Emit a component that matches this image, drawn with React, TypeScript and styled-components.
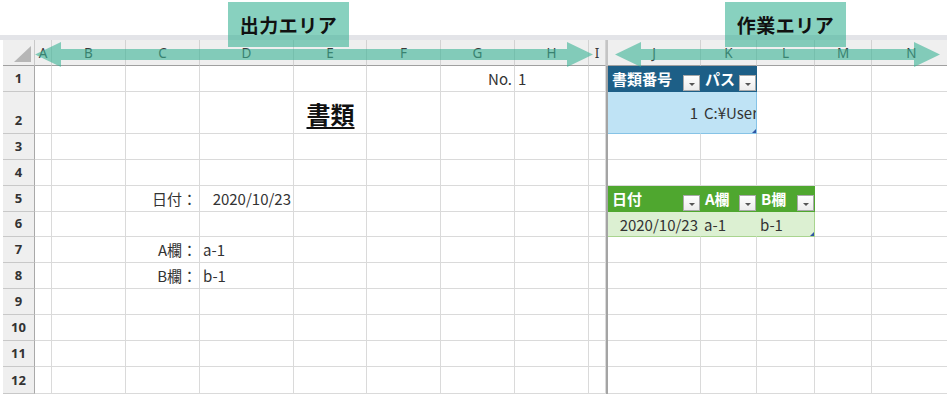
import * as React from "react";
import styled, { createGlobalStyle } from "styled-components";

const GlobalStyle = createGlobalStyle`
  html, body {
    margin: 0;
    padding: 0;
    background: #fff;
  }
  body {
    font-family: "Noto Sans CJK JP", "Noto Sans", sans-serif;
  }
`;

// column widths as measured in the workbook view
const COLUMNS = [
  { key: "A", width: 17 },
  { key: "B", width: 74 },
  { key: "C", width: 74 },
  { key: "D", width: 94 },
  { key: "E", width: 73 },
  { key: "F", width: 74 },
  { key: "G", width: 74 },
  { key: "H", width: 74 },
  { key: "I", width: 17 },
  { key: "|", width: 2 },
  { key: "J", width: 93 },
  { key: "K", width: 56 },
  { key: "L", width: 58 },
  { key: "M", width: 57 },
  { key: "N", width: 80 },
];

const ROW_HEIGHTS = [26, 42, 26, 26, 26, 25, 26, 26, 26, 26, 26, 27];

type Tone = "blueHead" | "blueBody" | "greenHead" | "greenBody";

interface CellData {
  text: string;
  align?: "left" | "right" | "center";
  title?: boolean;
  tone?: Tone;
  drop?: boolean;
  handle?: boolean;
  last?: boolean;
}

const TONES: Record<Tone, { bg: string; line: string; color: string }> = {
  blueHead: { bg: "#1d5f87", line: "#1d5f87", color: "#fff" },
  blueBody: { bg: "#bfe3f5", line: "#86c3e6", color: "#333" },
  greenHead: { bg: "#4fa72f", line: "#4fa72f", color: "#fff" },
  greenBody: { bg: "#dcf0d2", line: "#a9d48f", color: "#333" },
};

const DATA: Record<string, CellData> = {
  G1: { text: "No.", align: "right" },
  H1: { text: "1", align: "left" },
  E2: { text: "書類", align: "center", title: true },
  C5: { text: "日付：", align: "right" },
  D5: { text: "2020/10/23", align: "right" },
  C7: { text: "A欄：", align: "right" },
  D7: { text: "a-1", align: "left" },
  C8: { text: "B欄：", align: "right" },
  D8: { text: "b-1", align: "left" },

  J1: { text: "書類番号", tone: "blueHead", drop: true },
  K1: { text: "パス", tone: "blueHead", drop: true, last: true },
  J2: { text: "1", align: "right", tone: "blueBody" },
  K2: { text: "C:¥Users", align: "left", tone: "blueBody", handle: true, last: true },

  J5: { text: "日付", tone: "greenHead", drop: true },
  K5: { text: "A欄", tone: "greenHead", drop: true },
  L5: { text: "B欄", tone: "greenHead", drop: true, last: true },
  J6: { text: "2020/10/23", align: "right", tone: "greenBody" },
  K6: { text: "a-1", align: "left", tone: "greenBody" },
  L6: { text: "b-1", align: "left", tone: "greenBody", handle: true, last: true },
};

const Page = styled.div`
  position: relative;
  width: 947px;
  height: 394px;
  overflow: hidden;
  padding-top: 35px;
  box-sizing: border-box;
`;

const TopBand = styled.div`
  height: 5px;
  background: #e3e4e8;
`;

const Sheet = styled.div`
  display: grid;
  margin-left: 3px;
  grid-template-columns: 32px ${COLUMNS.map((c) => `${c.width}px`).join(" ")};
  grid-template-rows: 26px ${ROW_HEIGHTS.map((h) => `${h}px`).join(" ")};
`;

const Corner = styled.div`
  position: relative;
  background: #efefef;
  border-right: 1px solid #c9c9c9;
  border-bottom: 1px solid #a0a0a0;
  box-sizing: border-box;

  &::after {
    content: "";
    position: absolute;
    right: 3px;
    bottom: 3px;
    border-left: 17px solid transparent;
    border-bottom: 16px solid #b6b6b6;
  }
`;

const ColHead = styled.div`
  display: flex;
  align-items: center;
  justify-content: center;
  background: #efefef;
  border-right: 1px solid #d2d2d2;
  border-bottom: 1px solid #a0a0a0;
  box-sizing: border-box;
  font-family: "Noto Sans", "Open Sans", sans-serif;
  font-size: 13.5px;
  color: #3a3a3a;
`;

const RowHead = styled.div`
  display: flex;
  align-items: flex-end;
  justify-content: center;
  padding-bottom: 4px;
  background: #efefef;
  border-right: 1px solid #a9a9a9;
  border-bottom: 1px solid #c8c8c8;
  box-sizing: border-box;
  font-family: "Noto Sans", "Open Sans", sans-serif;
  font-weight: 700;
  font-size: 13px;
  color: #333;
`;

const FreezeBar = styled.div<{ $head?: boolean }>`
  background: ${(p) => (p.$head ? "#c4c4c4" : "#a4a4a4")};
`;

const Cell = styled.div<{
  $align: string;
  $bg: string;
  $lineRight: string;
  $lineBottom: string;
  $color: string;
  $handle?: boolean;
}>`
  position: relative;
  display: flex;
  align-items: center;
  justify-content: ${(p) =>
    p.$align === "right" ? "flex-end" : p.$align === "center" ? "center" : "flex-start"};
  padding: 0 2px 0 3px;
  min-width: 0;
  box-sizing: border-box;
  background: ${(p) => p.$bg};
  border-right: 1px solid ${(p) => p.$lineRight};
  border-bottom: 1px solid ${(p) => p.$lineBottom};
  overflow: hidden;
  white-space: nowrap;
  font-size: 15px;
  color: ${(p) => p.$color};

  ${(p) =>
    p.$handle &&
    `
    &::after {
      content: "";
      position: absolute;
      right: 0;
      bottom: 0;
      border-left: 4px solid transparent;
      border-bottom: 4px solid #2f55a4;
    }
  `}
`;

const HeadCell = styled.div<{ $bg: string; $color: string }>`
  display: flex;
  align-items: flex-end;
  justify-content: space-between;
  padding: 0 1px 1px 4px;
  box-sizing: border-box;
  background: ${(p) => p.$bg};
  overflow: hidden;
  white-space: nowrap;
  font-size: 15px;
  font-weight: 700;
  color: ${(p) => p.$color};
`;

const HeadLabel = styled.span`
  align-self: center;
`;

const DropButton = styled.span`
  flex: none;
  width: 17px;
  height: 16px;
  box-sizing: border-box;
  display: flex;
  align-items: center;
  justify-content: center;
  background: linear-gradient(#ffffff, #ececec);
  border: 1px solid #a9a9a9;

  &::after {
    content: "";
    margin-top: 2px;
    border-left: 3px solid transparent;
    border-right: 3px solid transparent;
    border-top: 3px solid #555;
  }
`;

const Title = styled.span`
  font-size: 24px;
  font-weight: 700;
  color: #111;
  text-decoration: underline;
  text-underline-offset: 3px;
  margin-top: 2px;
`;

const AreaLabel = styled.div<{ $left: number }>`
  position: absolute;
  top: 2px;
  left: ${(p) => p.$left}px;
  width: 121px;
  height: 45px;
  display: flex;
  align-items: center;
  justify-content: center;
  background: rgba(56, 178, 148, 0.6);
  font-size: 19px;
  font-weight: 700;
  color: #111;
  letter-spacing: 0.5px;
`;

const ArrowLayer = styled.svg`
  position: absolute;
  left: 0;
  top: 0;
  pointer-events: none;
`;

function arrowPoints(x1: number, x2: number) {
  const cy = 54.5;
  const head = 26;
  const hh = 12.5;
  const sh = 5.5;
  return [
    [x1, cy],
    [x1 + head, cy - hh],
    [x1 + head, cy - sh],
    [x2 - head, cy - sh],
    [x2 - head, cy - hh],
    [x2, cy],
    [x2 - head, cy + hh],
    [x2 - head, cy + sh],
    [x1 + head, cy + sh],
    [x1 + head, cy + hh],
  ]
    .map((pt) => pt.join(","))
    .join(" ");
}

function renderCell(colKey: string, row: number) {
  const id = `${colKey}${row}`;
  const data = DATA[id];

  if (colKey === "|") return <FreezeBar key={id} />;

  if (data && data.tone && data.drop) {
    const tone = TONES[data.tone];
    return (
      <HeadCell key={id} $bg={tone.bg} $color={tone.color}>
        <HeadLabel>{data.text}</HeadLabel>
        <DropButton />
      </HeadCell>
    );
  }

  const tone = data && data.tone ? TONES[data.tone] : null;
  return (
    <Cell
      key={id}
      $align={data?.align || "left"}
      $bg={tone ? tone.bg : "#fff"}
      $lineRight={tone ? (data?.last ? tone.line : tone.bg) : "#dadada"}
      $lineBottom={tone ? tone.line : "#dadada"}
      $color={tone ? tone.color : "#333"}
      $handle={data?.handle}
    >
      {data ? data.title ? <Title>{data.text}</Title> : data.text : null}
    </Cell>
  );
}

const App = () => {
  return (
    <Page>
      <GlobalStyle />
      <TopBand />
      <Sheet>
        <Corner />
        {COLUMNS.map((c) =>
          c.key === "|" ? (
            <FreezeBar key="head-freeze" $head />
          ) : (
            <ColHead key={`head-${c.key}`}>{c.key}</ColHead>
          )
        )}
        {ROW_HEIGHTS.map((_, i) => (
          <React.Fragment key={`row-${i + 1}`}>
            <RowHead>{i + 1}</RowHead>
            {COLUMNS.map((c) => renderCell(c.key, i + 1))}
          </React.Fragment>
        ))}
      </Sheet>

      <ArrowLayer width={947} height={80} viewBox="0 0 947 80">
        <polygon points={arrowPoints(35, 593)} fill="rgba(56, 178, 148, 0.6)" />
        <polygon points={arrowPoints(615, 940)} fill="rgba(56, 178, 148, 0.6)" />
      </ArrowLayer>
      <AreaLabel $left={228}>出力エリア</AreaLabel>
      <AreaLabel $left={725}>作業エリア</AreaLabel>
    </Page>
  );
};

export default App;
